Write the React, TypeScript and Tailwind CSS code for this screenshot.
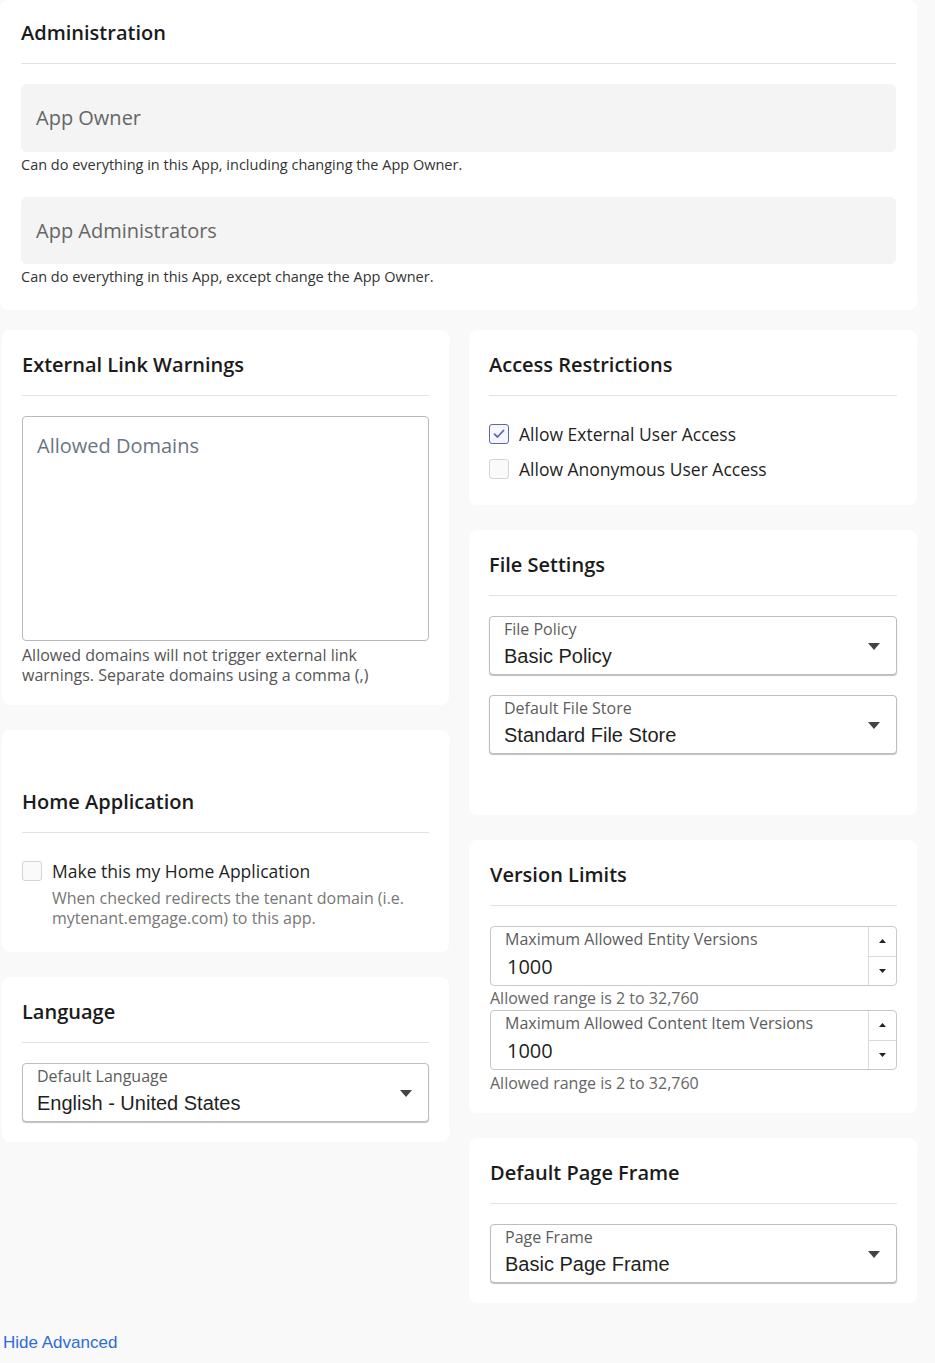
import React, { useState } from 'react';

const openSans = "font-['Open_Sans',sans-serif]";
const arial = "font-['Liberation_Sans',Arial,sans-serif]";

const Card: React.FC<{ title: string; className?: string; children: React.ReactNode }> = ({ title, className = '', children }) => (
  <div className={`bg-white rounded-lg px-5 pt-[22px] ${className}`}>
    <h3 className={`text-[20px] leading-[26px] font-semibold text-[#1b1b1b] ${openSans}`}>{title}</h3>
    <div className="mt-[17px] mb-5 h-px bg-[#e2e2e2]" />
    {children}
  </div>
);

const Caret = () => (
  <svg width="12" height="7" viewBox="0 0 12 7" className="absolute right-4 top-[26px]">
    <path d="M0 0 L12 0 L6 7 Z" fill="#444" />
  </svg>
);

const SelectBox: React.FC<{ label: string; value: string }> = ({ label, value }) => (
  <div className="relative h-[59px] rounded border border-[#bdbdbd] bg-white shadow-[0_1px_1px_rgba(0,0,0,0.25)] pl-[14px]">
    <div className={`pt-[2px] text-[16px] leading-[20px] text-[#5c5c5c] ${openSans}`}>{label}</div>
    <div className={`mt-[6px] text-[20px] leading-[22px] text-[#1f1f1f] ${arial}`}>{value}</div>
    <Caret />
  </div>
);

const NumberBox: React.FC<{ label: string; value: string }> = ({ label, value }) => (
  <div className="flex h-[60px] rounded border border-[#c8c8c8] bg-white">
    <div className="flex-1 pl-[14px]">
      <div className={`pt-[2px] text-[16px] leading-[20px] text-[#5c5c5c] ${openSans}`}>{label}</div>
      <div className={`mt-[6px] pl-[2px] text-[20px] leading-[24px] text-[#1f1f1f] ${openSans}`}>{value}</div>
    </div>
    <div className="flex w-[28px] flex-col border-l border-[#dadada]">
      <div className="flex flex-1 items-center justify-center border-b border-[#dadada]">
        <svg width="7" height="4" viewBox="0 0 7 4"><path d="M0 4 L7 4 L3.5 0 Z" fill="#222" /></svg>
      </div>
      <div className="flex flex-1 items-center justify-center">
        <svg width="7" height="4" viewBox="0 0 7 4"><path d="M0 0 L7 0 L3.5 4 Z" fill="#222" /></svg>
      </div>
    </div>
  </div>
);

const Check: React.FC<{ checked: boolean; onToggle: () => void }> = ({ checked, onToggle }) => (
  <button
    onClick={onToggle}
    className={`flex h-5 w-5 shrink-0 items-center justify-center rounded-[3px] border ${checked ? 'border-[#5d62c4] bg-[#f7f7ff]' : 'border-[#d4d4da] bg-[#fafafa]'}`}
  >
    {checked && (
      <svg width="12" height="10" viewBox="0 0 12 10">
        <path d="M1.5 5.2 L4.5 8 L10.5 1.5" stroke="#5d62c4" strokeWidth="1.8" fill="none" strokeLinecap="round" strokeLinejoin="round" />
      </svg>
    )}
  </button>
);

export default function App() {
  const [external, setExternal] = useState(true);
  const [anon, setAnon] = useState(false);
  const [home, setHome] = useState(false);

  return (
    <div className={`min-h-[1363px] w-[935px] bg-[#f9f9f9] ${openSans}`}>
      <div className="w-[917px]">
        <div className="bg-white rounded-lg px-[21px] pt-5 pb-[23px]">
          <h3 className="text-[20px] leading-[26px] font-semibold text-[#1b1b1b]">Administration</h3>
          <div className="mt-[17px] mb-5 h-px bg-[#e2e2e2]" />
          <div className="flex h-[68px] items-center rounded-md bg-[#f4f4f4] px-[15px] text-[20px] text-[#666]">App Owner</div>
          <p className="mt-[3px] text-[14.5px] leading-[20px] text-[#333]">Can do everything in this App, including changing the App Owner.</p>
          <div className="mt-[22px] flex h-[67px] items-center rounded-md bg-[#f4f4f4] px-[15px] text-[20px] text-[#666]">App Administrators</div>
          <p className="mt-[3px] text-[14.5px] leading-[20px] text-[#333]">Can do everything in this App, except change the App Owner.</p>
        </div>

        <div className="mt-5 grid grid-cols-[449px_448px] gap-x-5">
          <div className="flex flex-col gap-[25px] pl-[2px]">
            <Card title="External Link Warnings" className="pb-5">
              <div className="h-[225px] rounded border border-[#b9b9b9] px-[14px] pt-[15px] text-[20px] leading-[28px] text-[#6a7583]">Allowed Domains</div>
              <p className="mt-[4px] text-[16px] leading-[20px] text-[#555]">
                Allowed domains will not trigger external link warnings. Separate domains using a comma (,)
              </p>
            </Card>
            <Card title="Home Application" className="pb-[24px] pt-[59px]">
              <div className="flex items-start gap-[10px] pt-[6px]">
                <div className="pt-[2px]">
                  <Check checked={home} onToggle={() => setHome(!home)} />
                </div>
                <div>
                  <div className="text-[17.5px] leading-[24px] text-[#1f1f1f]">Make this my Home Application</div>
                  <p className="mt-[5px] text-[16px] leading-[20px] text-[#777]">
                    When checked redirects the tenant domain (i.e. mytenant.emgage.com) to this app.
                  </p>
                </div>
              </div>
            </Card>
            <Card title="Language" className="pb-5">
              <SelectBox label="Default Language" value="English - United States" />
            </Card>
          </div>

          <div className="flex flex-col gap-[25px]">
            <Card title="Access Restrictions" className="pb-[24px]">
              <div className="flex flex-col gap-[11px] pt-[6px] text-[17.5px] leading-[24px] text-[#1f1f1f]">
                <label className="flex items-center gap-[10px]">
                  <Check checked={external} onToggle={() => setExternal(!external)} />
                  Allow External User Access
                </label>
                <label className="flex items-center gap-[10px]">
                  <Check checked={anon} onToggle={() => setAnon(!anon)} />
                  Allow Anonymous User Access
                </label>
              </div>
            </Card>
            <Card title="File Settings" className="pb-[61px]">
              <div className="flex flex-col gap-5">
                <SelectBox label="File Policy" value="Basic Policy" />
                <SelectBox label="Default File Store" value="Standard File Store" />
              </div>
            </Card>
            <Card title="Version Limits" className="pb-[18px] pl-[21px]">
              <NumberBox label="Maximum Allowed Entity Versions" value="1000" />
              <p className="text-[16px] leading-[24px] text-[#666]">Allowed range is 2 to 32,760</p>
              <NumberBox label="Maximum Allowed Content Item Versions" value="1000" />
              <p className="mt-[1px] text-[16px] leading-[24px] text-[#666]">Allowed range is 2 to 32,760</p>
            </Card>
            <Card title="Default Page Frame" className="pb-5 pl-[21px]">
              <SelectBox label="Page Frame" value="Basic Page Frame" />
            </Card>
          </div>
        </div>

        <a href="#" className={`mt-[30px] ml-[3px] inline-block text-[17px] leading-[20px] text-[#2d6bd6] ${arial}`}>Hide Advanced</a>
      </div>
    </div>
  );
}
